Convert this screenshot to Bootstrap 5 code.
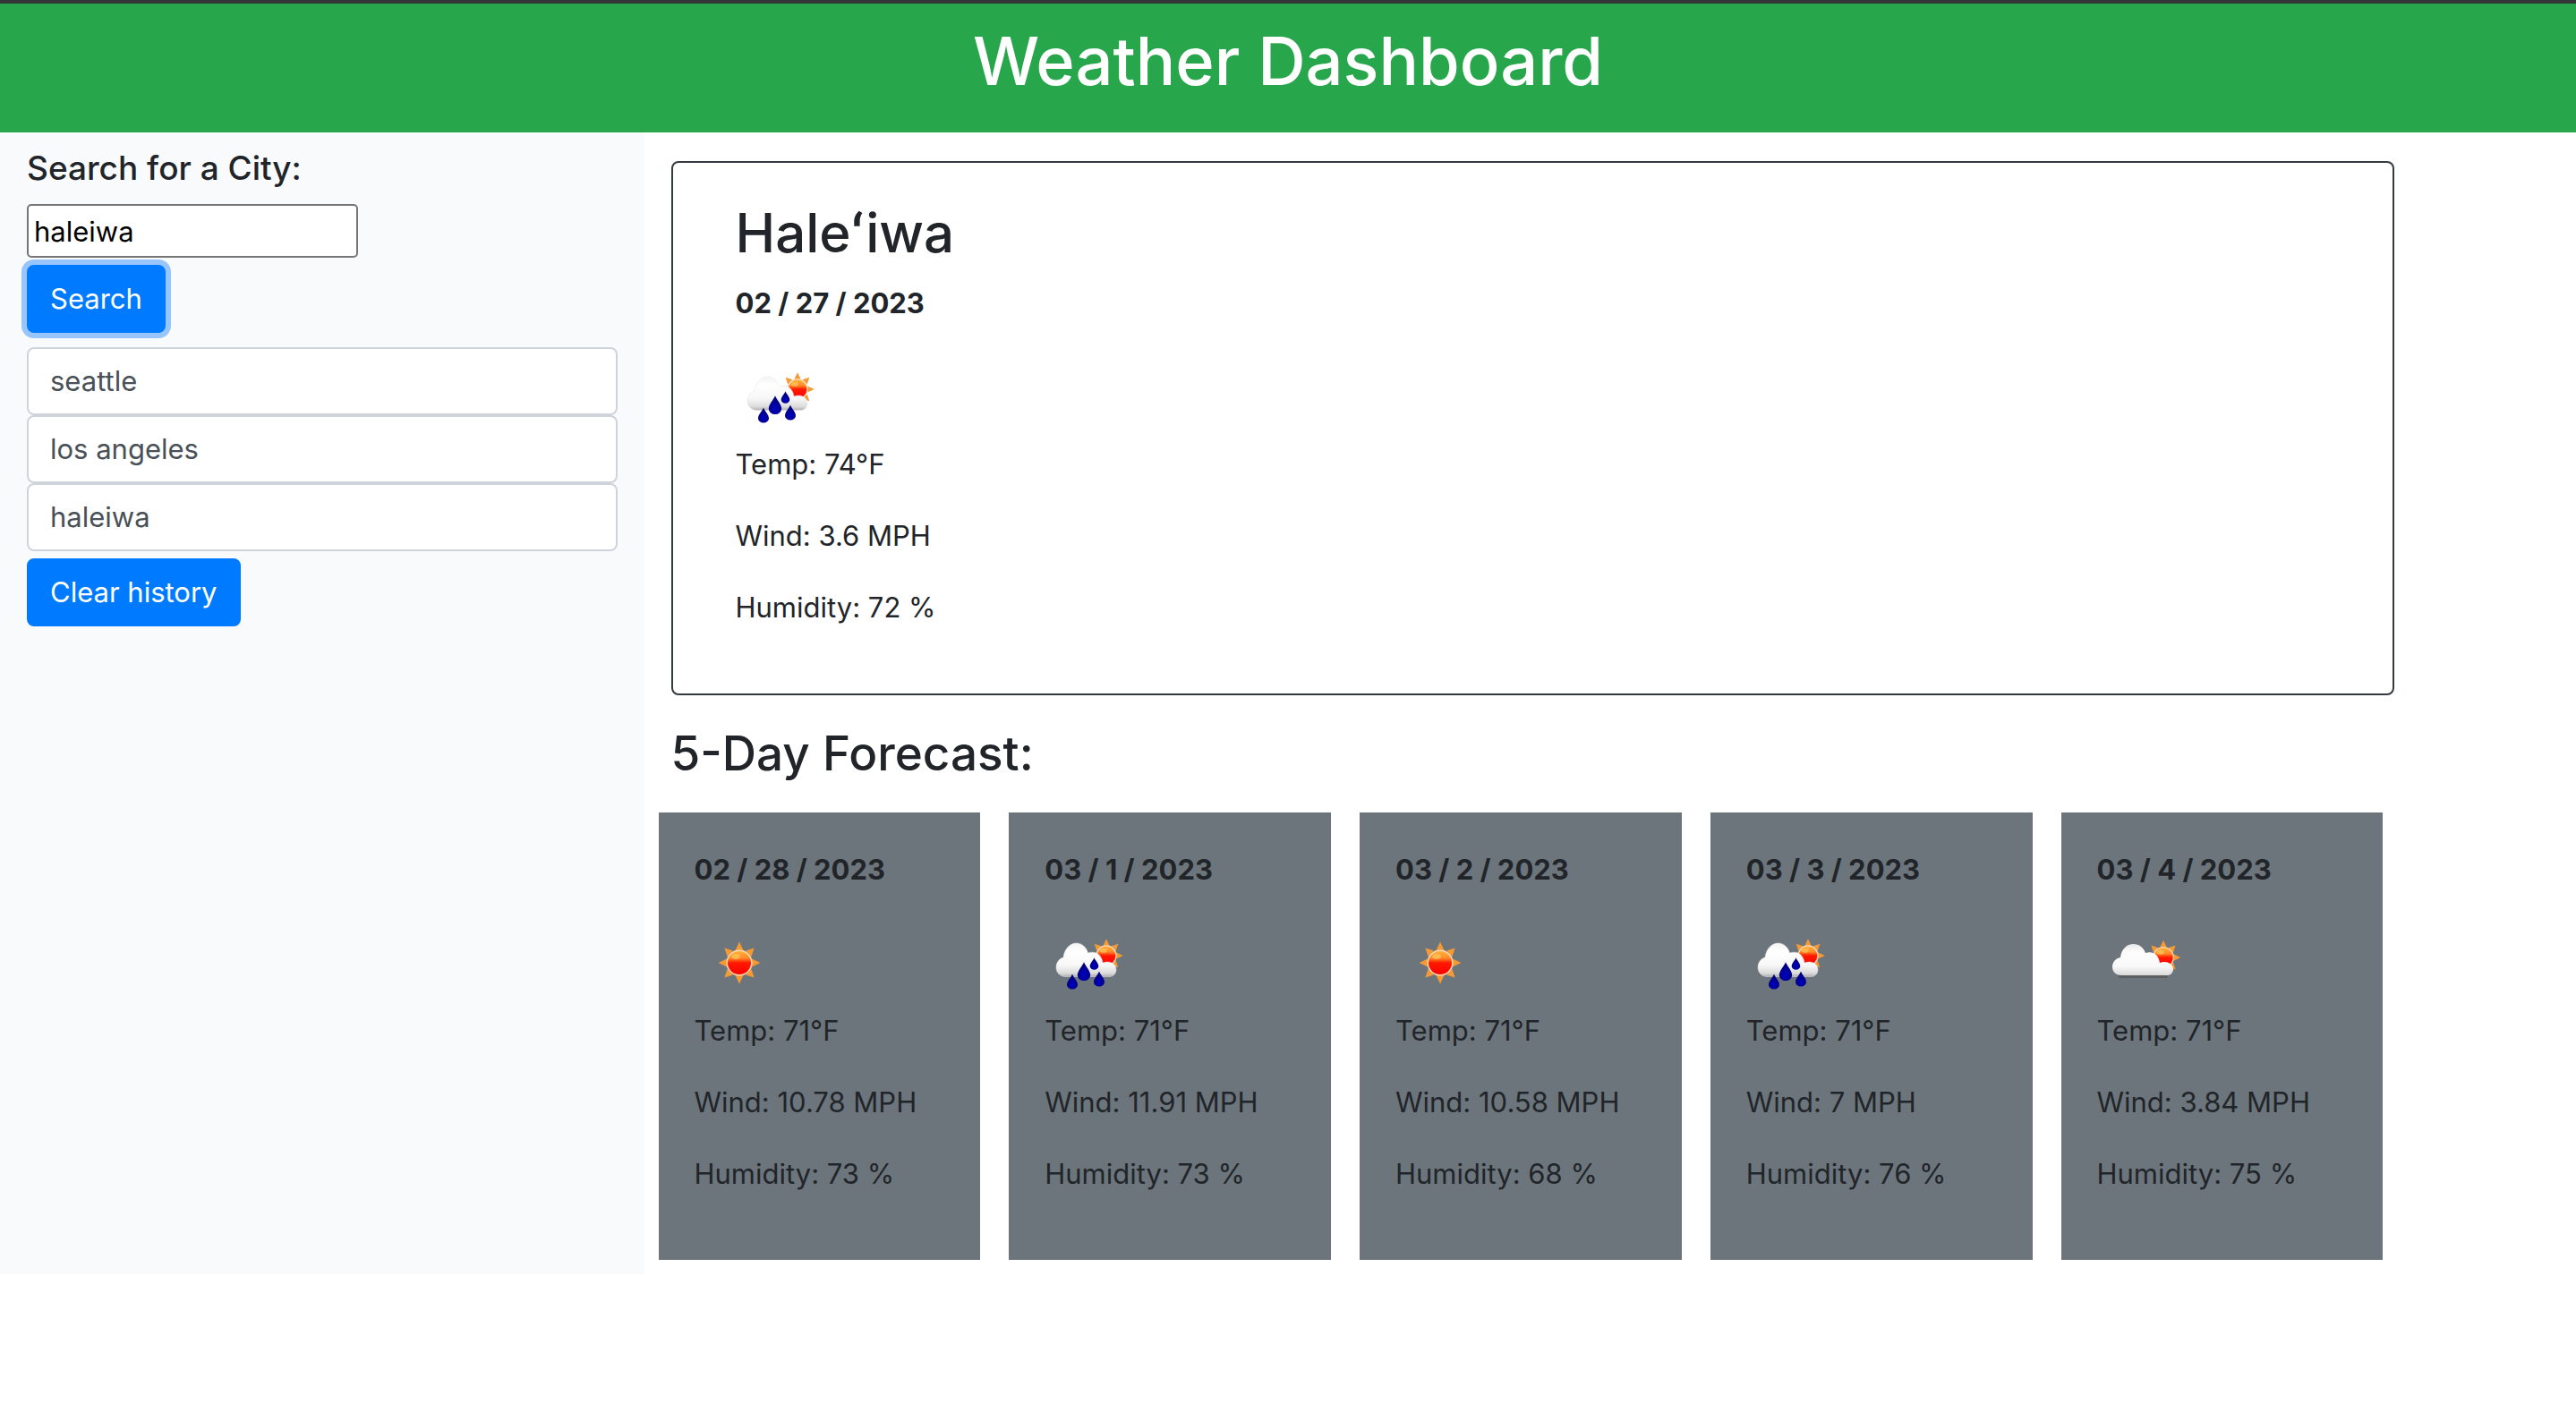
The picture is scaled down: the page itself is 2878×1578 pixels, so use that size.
<!DOCTYPE html>
<html lang="en">
<head>
<meta charset="utf-8">
<meta name="viewport" content="width=device-width, initial-scale=1">
<title>Weather Dashboard</title>
<link rel="stylesheet" href="https://cdn.jsdelivr.net/npm/bootstrap@5.3.0/dist/css/bootstrap.min.css">
<script src="https://cdn.jsdelivr.net/npm/bootstrap@5.3.0/dist/js/bootstrap.bundle.min.js"></script>
<style>
  html { font-size: 32px; }
  body { font-family: Inter, "Liberation Sans", sans-serif; font-size: 31px; line-height: 48px; color: #212529; background: #fff; }
  .page-header { background: #27a64c; border-top: 4px solid #343537; }
  .page-header h1 { font-size: 74px; line-height: 96px; }
  .search-panel { background: #f8fafc; padding: 16px 30px; }
  .search-panel h2 { font-size: 37px; line-height: 48px; }
  .city-input { width: 370px; max-width: 100%; height: 60px; padding: 2px 6px; border: 2px solid #767676; border-radius: 5px; color: #000; background: #fff; }
  .btn { --bs-btn-font-size: 31px; --bs-btn-line-height: 48px; --bs-btn-padding-x: 24px; --bs-btn-padding-y: 12px; --bs-btn-border-width: 2px; --bs-btn-border-radius: 8px; }
  .btn-primary { --bs-btn-bg: #007bff; --bs-btn-border-color: #007bff; }
  .btn-search { box-shadow: 0 0 0 6px #98c6fc; }
  .btn-city { --bs-btn-bg: #fff; --bs-btn-color: #495057; --bs-btn-border-color: #ced4da; }
  .results { padding: 32px 30px 0; }
  .today { width: 91.75%; padding: 40px 70px; border: 2px solid #343a40; border-radius: 8px; }
  .today h2 { font-size: 60px; line-height: 77px; }
  .results h3 { font-size: 53px; line-height: 67px; }
  .day-tile { background: #6c757c; padding: 40px; }
  .weather-icon { display: block; width: 100px; height: 100px; }
  .reading { margin-bottom: 32px; }
</style>
</head>
<body>
<svg width="0" height="0" class="position-absolute" aria-hidden="true">
  <defs>
    <linearGradient id="disc" x1="0" y1="0" x2="0" y2="1">
      <stop offset="0" stop-color="#ffb13c"/><stop offset=".3" stop-color="#ff8a2a"/><stop offset=".5" stop-color="#ff1a00"/><stop offset="1" stop-color="#fb0000"/>
    </linearGradient>
    <linearGradient id="cloud" gradientUnits="userSpaceOnUse" x1="0" y1="26" x2="0" y2="64">
      <stop offset="0" stop-color="#f4f4f4"/><stop offset=".25" stop-color="#fff"/><stop offset=".65" stop-color="#f7f7f7"/><stop offset=".88" stop-color="#dcdcdc"/><stop offset="1" stop-color="#a9a9a9"/>
    </linearGradient>
    <linearGradient id="cloudlight" gradientUnits="userSpaceOnUse" x1="0" y1="27" x2="0" y2="62">
      <stop offset="0" stop-color="#e6e6e6"/><stop offset=".25" stop-color="#fdfdfd"/><stop offset=".7" stop-color="#fafafa"/><stop offset="1" stop-color="#d9d9d9"/>
    </linearGradient>
    <radialGradient id="water" cx=".5" cy=".7" r=".6">
      <stop offset="0" stop-color="#0000c8"/><stop offset="1" stop-color="#00006e"/>
    </radialGradient>
    <g id="sunshape">
      <path fill="#f39a35" d="M0-23.500L4.500-14-4.500-14ZM0 23.500L4.500 14-4.500 14ZM23.500 0L14 4.500 14-4.500ZM-23.500 0L-14 4.500-14-4.500ZM16.600-16.600L13.500-7 7-13.500ZM-16.600-16.600L-13.500-7-7-13.500ZM16.600 16.600L13.500 7 7 13.500ZM-16.600 16.600L-13.500 7-7 13.500Z"/>
      <circle r="14.600" fill="#ffd9b0"/>
      <circle r="13" fill="url(#disc)"/>
      <ellipse cx="-4" cy="-7" rx="5" ry="3" fill="#ffd76a" opacity=".55"/>
    </g>
    <path id="drop" d="M0-10C1-6 6-1 6 4A6 6 0 0 1-6 4C-6-1-1-6 0-10Z" fill="url(#water)"/>
    <symbol id="sunny" viewBox="0 0 100 100"><use href="#sunshape" x="50" y="48"/></symbol>
    <symbol id="partly" viewBox="0 0 100 100">
      <use href="#sunshape" transform="translate(74 42) scale(.82)"/>
      <rect x="24" y="58" width="55" height="7" rx="2" fill="#5d5e60"/>
      <path fill="url(#cloudlight)" d="M27 62C21 62 17 58 17 52.500C17 47 21 43 26 42C27 33 33 27 40.500 27C47 27 52 31 54 37C62 34 69 39 70 48C77 45 85 49 85 55C85 59 82 62 79 62Z"/>
    </symbol>
    <symbol id="rainy" viewBox="0 0 100 100">
      <use href="#sunshape" transform="translate(69 40) scale(.8)"/>
      <path fill="url(#cloud)" stroke="#e4e4e4" stroke-width=".5" d="M23 63.500C17 63 13 59 13 53C13 47 17 43 21 42C22 33 28 26 35.500 26C42 26 47 31 48.500 37C57 34 64 39 65 48C73 45 80 49 80 55.500C80 60 77 63 73 63.500Z"/>
      <use href="#drop" transform="translate(31 69) scale(1 .86)"/>
      <use href="#drop" transform="translate(44 57.500) scale(1.200 1.060)"/>
      <use href="#drop" transform="translate(55.500 49) scale(.8 .68)"/>
      <use href="#drop" transform="translate(61 66) scale(1 .86)"/>
    </symbol>
  </defs>
</svg>

<header class="page-header text-white text-center p-2">
  <h1 class="mb-2">Weather Dashboard</h1>
</header>

<div class="row g-0">
  <aside class="col-3 search-panel">
    <form class="d-flex flex-column align-items-start" onsubmit="return false">
      <h2 class="mb-2"><label for="city">Search for a City:</label></h2>
      <input type="text" id="city" class="city-input mb-1" value="haleiwa">
      <button type="submit" class="btn btn-primary btn-search mb-2">Search</button>
    </form>
    <div class="d-flex flex-column">
      <button type="button" class="btn btn-city text-start">seattle</button>
      <button type="button" class="btn btn-city text-start">los angeles</button>
      <button type="button" class="btn btn-city text-start">haleiwa</button>
    </div>
    <button type="button" class="btn btn-primary mt-1">Clear history</button>
  </aside>

  <main class="col-9">
    <div class="results">
      <section class="today">
        <h2 class="mb-2">Haleʻiwa</h2>
        <p class="reading fw-bold">02 / 27 / 2023</p>
        <svg class="weather-icon" role="img" aria-label="Rain"><use href="#rainy"/></svg>
        <p class="reading">Temp: 74°F</p>
        <p class="reading">Wind: 3.6 MPH</p>
        <p class="reading">Humidity: 72 %</p>
      </section>
      <h3 class="mt-3 mb-3">5-Day Forecast:</h3>
    </div>
    <section class="d-flex pb-2">
      <article class="col-2 mx-2 day-tile">
        <p class="reading fw-bold">02 / 28 / 2023</p>
        <svg class="weather-icon" role="img" aria-label="Clear"><use href="#sunny"/></svg>
        <p class="reading">Temp: 71°F</p>
        <p class="reading">Wind: 10.78 MPH</p>
        <p class="reading">Humidity: 73 %</p>
      </article>
      <article class="col-2 mx-2 day-tile">
        <p class="reading fw-bold">03 / 1 / 2023</p>
        <svg class="weather-icon" role="img" aria-label="Rain"><use href="#rainy"/></svg>
        <p class="reading">Temp: 71°F</p>
        <p class="reading">Wind: 11.91 MPH</p>
        <p class="reading">Humidity: 73 %</p>
      </article>
      <article class="col-2 mx-2 day-tile">
        <p class="reading fw-bold">03 / 2 / 2023</p>
        <svg class="weather-icon" role="img" aria-label="Clear"><use href="#sunny"/></svg>
        <p class="reading">Temp: 71°F</p>
        <p class="reading">Wind: 10.58 MPH</p>
        <p class="reading">Humidity: 68 %</p>
      </article>
      <article class="col-2 mx-2 day-tile">
        <p class="reading fw-bold">03 / 3 / 2023</p>
        <svg class="weather-icon" role="img" aria-label="Rain"><use href="#rainy"/></svg>
        <p class="reading">Temp: 71°F</p>
        <p class="reading">Wind: 7 MPH</p>
        <p class="reading">Humidity: 76 %</p>
      </article>
      <article class="col-2 mx-2 day-tile">
        <p class="reading fw-bold">03 / 4 / 2023</p>
        <svg class="weather-icon" role="img" aria-label="Few clouds"><use href="#partly"/></svg>
        <p class="reading">Temp: 71°F</p>
        <p class="reading">Wind: 3.84 MPH</p>
        <p class="reading">Humidity: 75 %</p>
      </article>
    </section>
  </main>
</div>
</body>
</html>
